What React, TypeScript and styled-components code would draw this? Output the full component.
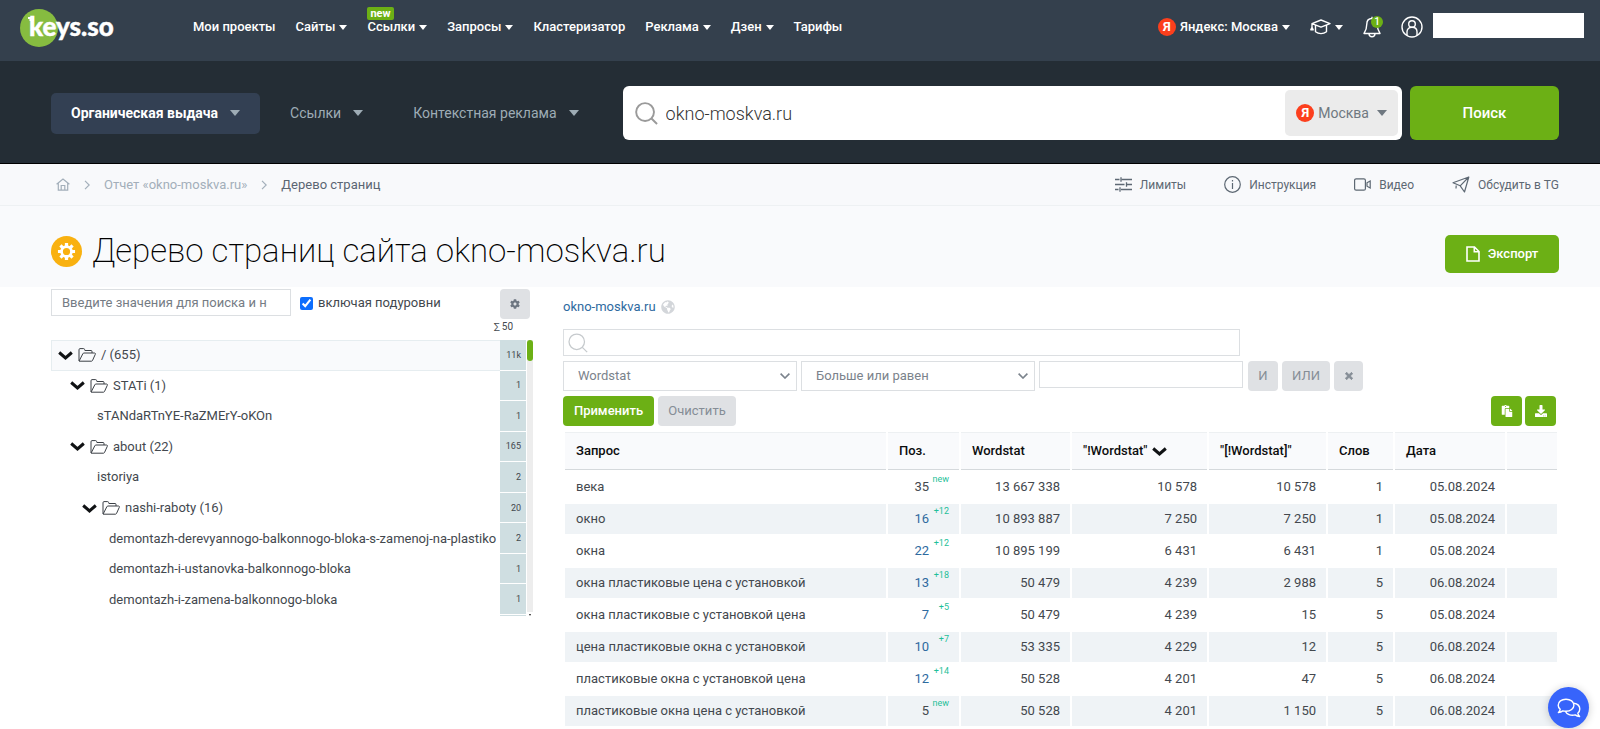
import React from "react";
import styled, { createGlobalStyle } from "styled-components";
import { FaCog, FaDownload, FaPaste, FaTimes, FaGlobeAmericas } from "react-icons/fa";

const GlobalStyle = createGlobalStyle`
  *, *::before, *::after { box-sizing: border-box; }
  body {
    margin: 0;
    background: #fff;
    color: #43484e;
    font-family: Roboto, "Liberation Sans", sans-serif;
    font-size: 13px;
    font-weight: 400;
    line-height: 20px;
  }
  button, input, select { font: inherit; color: inherit; margin: 0; }
  button { cursor: pointer; border: 0; padding: 0; background: none; }
  a { text-decoration: none; color: inherit; }
  svg { display: block; flex: none; }
`;

/* ---------- icons ---------- */

const Caret = styled.span<{ $size?: number }>`
  flex: none;
  width: 0;
  height: 0;
  border: ${(p) => p.$size ?? 4}px solid transparent;
  border-top: ${(p) => (p.$size ?? 4) + 1}px solid currentColor;
  border-bottom: 0;
`;

const SearchIcon = ({ size, width = 2 }: { size: number; width?: number }) => (
  <svg width={size} height={size} viewBox="0 0 24 24" fill="none" stroke="currentColor" strokeWidth={width}>
    <circle cx="10.5" cy="10.5" r="9.3" />
    <path d="M17.2 17.2 23 23" />
  </svg>
);

const FolderIcon = () => (
  <svg width="18" height="14" viewBox="0 0 18 14" fill="none" stroke="#3a3f45" strokeWidth="1">
    <path d="M1 13V1.8C1 1 1.4.6 2 .6h3.6c.6 0 .9.3 1 .9l.3 1H13c.7 0 1 .3 1 1V5" />
    <path d="M1 13.2h12.4c.5 0 .9-.2 1.100-.7L17.300 6.300C17.600 5.500 17.300 5 16.500 5H6c-.6 0-1 .3-1.200.8L1.200 12.900" />
  </svg>
);

const BoldChevron = ({ size = 15 }: { size?: number }) => (
  <svg width={size} height="9" viewBox="0 0 15 9" fill="none" stroke="#101214" strokeWidth="3">
    <path d="M1.200 1.500 7.500 7l6.300-5.500" />
  </svg>
);

const ThinChevron = () => (
  <svg width="6" height="10" viewBox="0 0 6 10" fill="none" stroke="currentColor" strokeWidth="1.2">
    <path d="M1 .8 5.200 5 1 9.200" />
  </svg>
);

const HomeIcon = () => (
  <svg width="14" height="13" viewBox="0 0 14 13" fill="none" stroke="currentColor" strokeWidth="1.200">
    <path d="M.6 6.300 7 1l6.400 5.300M2.300 5.200v7h9.400v-7M5.200 12V7.500h3.600V12" />
  </svg>
);

const LimitsIcon = () => (
  <svg width="17" height="15" viewBox="0 0 17 15" fill="none" stroke="currentColor" strokeWidth="1.300">
    <path d="M0 2.500h4.500M6.800 2.500H17M6 .3v4.400M0 7.500h9.500M12 7.500h5M11.500 5.300v4.400M0 12.500h3.500M6 12.500h11M5 10.300v4.400" />
  </svg>
);

const InfoIcon = () => (
  <svg width="17" height="17" viewBox="0 0 17 17" fill="none" stroke="currentColor" strokeWidth="1.200">
    <circle cx="8.500" cy="8.500" r="7.800" />
    <path d="M8.500 7v6M8.500 4v1.500" />
  </svg>
);

const VideoIcon = () => (
  <svg width="17" height="13" viewBox="0 0 17 13" fill="none" stroke="currentColor" strokeWidth="1.200">
    <rect x=".6" y=".8" width="10.800" height="11.400" rx="1.500" />
    <path d="M13 4.800 16.200 3v7L13 8.200Z" />
  </svg>
);

const PlaneIcon = () => (
  <svg width="18" height="17" viewBox="0 0 18 17" fill="none" stroke="currentColor" strokeWidth="1.200" strokeLinejoin="round">
    <path d="M1 6.800 16.800 1l-4.300 15-4.300-6.200ZM8.200 9.800 16.800 1M4.200 9.500l-.2 3" />
  </svg>
);

const CapIcon = () => (
  <svg width="21" height="16" viewBox="0 0 21 16" fill="none" stroke="currentColor" strokeWidth="1.400" strokeLinejoin="round">
    <path d="M11 1 20 4.600 11 8.200 2 4.600ZM5.500 6.500v6.200c3.200 2.300 7.800 2.300 11 0V6.500M2 4.600v3.600M.8 10.800 2 8.300l1.200 2.500Z" />
  </svg>
);

const BellIcon = () => (
  <svg width="18" height="22" viewBox="0 0 18 22" fill="none" stroke="currentColor" strokeWidth="1.400" strokeLinejoin="round">
    <path d="M9 2.500c-3.500 0-5.200 2.500-5.200 5.500 0 5-1.200 7.200-2.800 9.500h16c-1.600-2.300-2.800-4.500-2.800-9.500 0-3-1.700-5.500-5.200-5.500ZM9 2.500V.8M6 18c.3 3.600 5.700 3.600 6 0" />
  </svg>
);

const UserIcon = () => (
  <svg width="22" height="22" viewBox="0 0 22 22" fill="none" stroke="currentColor" strokeWidth="1.400">
    <circle cx="11" cy="11" r="10" />
    <circle cx="11" cy="8" r="3.300" />
    <path d="M6 19.200v-3.400c0-2.800 2-4.500 5-4.500s5 1.700 5 4.500v3.400" />
  </svg>
);

const GearIcon = () => (
  <svg width="19" height="19" viewBox="-10 -10 20 20" fill="none" stroke="#fff">
    <circle r="5.200" strokeWidth="2.800" />
    {[0, 45, 90, 135].map((angle) => (
      <path key={angle} d="M0-9v3.500M0 9V5.500" strokeWidth="3.400" transform={`rotate(${angle})`} />
    ))}
  </svg>
);

const FileIcon = () => (
  <svg width="14" height="16" viewBox="0 0 14 16" fill="none" stroke="currentColor" strokeWidth="1.600">
    <path d="M1 1h7.500L13 5.500V15H1ZM8.300 1v4.700H13" />
  </svg>
);

const ChatIcon = () => (
  <svg width="24" height="20" viewBox="0 0 24 20" fill="none" stroke="#fff" strokeWidth="1.400" strokeLinejoin="round">
    <path d="M9 1.200C4.500 1.200 1.200 3.700 1.200 7.200c0 1.700.8 3 2 4.100-.2 1.200-.8 2.300-1.800 3.200 1.700 0 3.200-.6 4.400-1.600 1 .3 2 .4 3.200.4 4.500 0 7.900-2.600 7.900-6.100S13.500 1.200 9 1.200Z" />
    <path d="M16.700 5.200c3.500.5 6.100 2.700 6.100 5.800 0 1.700-.8 3.100-2 4.200.2 1.200.8 2.300 1.800 3.300-1.700 0-3.200-.6-4.400-1.600-4.400 1-8.600-.6-9.900-3.600" />
  </svg>
);

const SelectArrow = () => (
  <svg width="10" height="6" viewBox="0 0 10 6" fill="none" stroke="currentColor" strokeWidth="1.600">
    <path d="M.6.6 5 5 9.400.6" />
  </svg>
);

/* ---------- top bar ---------- */

const TopBar = styled.header`
  display: flex;
  align-items: flex-start;
  height: 61px;
  padding: 0 16px 0 20px;
  background: #34404d;
  color: #fff;
`;

const Logo = styled.a`
  display: block;
  width: 98px;
  margin: 9px 75px 0 0;
`;

const Nav = styled.nav`
  display: flex;
  gap: 20px;
  margin-top: 17px;
`;

const NavLink = styled.a`
  position: relative;
  display: flex;
  align-items: center;
  gap: 4px;
  font-weight: 500;
  white-space: nowrap;
`;

const NewBadge = styled.span`
  position: absolute;
  left: 0;
  top: -10px;
  padding: 0 3px;
  border-radius: 2px;
  background: #6cb015;
  font-size: 11px;
  font-weight: 700;
  line-height: 13px;
`;

const UserTools = styled.div`
  display: flex;
  align-items: flex-start;
  margin-left: auto;
`;

const ToolButton = styled.button<{ $gap?: number }>`
  position: relative;
  display: flex;
  align-items: center;
  gap: 4px;
  height: 22px;
  margin: 16px ${(p) => p.$gap ?? 20}px 0 0;
  font-weight: 500;
  white-space: nowrap;
`;

const YandexMark = styled.span`
  display: grid;
  place-items: center;
  width: 18px;
  height: 18px;
  border-radius: 50%;
  background: #fc3f1d;
  color: #fff;
  font-size: 13px;
  font-weight: 700;
  line-height: 18px;
`;

const CountBadge = styled.span`
  position: absolute;
  right: -2px;
  top: 0;
  width: 12px;
  height: 12px;
  border-radius: 50%;
  background: #6cb015;
  font-size: 10px;
  line-height: 12px;
  text-align: center;
`;

const AccountName = styled.div`
  width: 151px;
  height: 25px;
  margin-top: 13px;
  background: #fff;
`;

/* ---------- search bar ---------- */

const SearchBar = styled.section`
  display: flex;
  align-items: center;
  height: 103px;
  padding: 2px 41px 0 51px;
  border-bottom: 1px solid #000;
  background: #242d35;
`;

const Tab = styled.button<{ $active?: boolean }>`
  display: flex;
  align-items: center;
  gap: 12px;
  height: 41px;
  padding: 0 20px;
  margin-right: 10px;
  border-radius: 5px;
  background: ${(p) => (p.$active ? "#334053" : "transparent")};
  color: #9eacb5;
  font-size: 14px;
  font-weight: ${(p) => (p.$active ? 700 : 400)};
  white-space: nowrap;
`;

const TabLabel = styled.span<{ $active?: boolean }>`
  color: ${(p) => (p.$active ? "#fff" : "inherit")};
`;

const SearchBox = styled.form`
  display: flex;
  flex: 1;
  min-width: 0;
  gap: 8px;
  margin-left: 14px;
`;

const SearchField = styled.div`
  display: flex;
  align-items: center;
  flex: 1;
  min-width: 0;
  height: 54px;
  padding: 0 4px 0 12px;
  border-radius: 6px;
  background: #fff;
  color: #9a9a9a;
`;

const SearchInput = styled.input`
  flex: 1;
  min-width: 0;
  height: 40px;
  padding: 0 8px;
  border: 0;
  outline: 0;
  color: #333;
  font-size: 18px;
  font-weight: 300;
`;

const RegionButton = styled.button`
  display: flex;
  align-items: center;
  gap: 4px;
  height: 46px;
  padding: 0 11px;
  border-radius: 5px;
  background: #ebebeb;
  color: #6f7880;
  font-size: 14px;
`;

const RegionCaret = styled(Caret)`
  margin-left: 4px;
`;

const SubmitButton = styled.button`
  width: 149px;
  height: 54px;
  border-radius: 6px;
  background: #6cb015;
  color: #fff;
  font-size: 15px;
  font-weight: 500;
`;

/* ---------- breadcrumbs and title ---------- */

const Crumbs = styled.div`
  display: flex;
  align-items: center;
  justify-content: space-between;
  height: 42px;
  padding: 0 41px 0 56px;
  border-bottom: 1px solid #eef1f3;
  background: #f8f9fb;
`;

const CrumbList = styled.nav`
  display: flex;
  align-items: center;
  gap: 14px;
  color: #a3afba;
`;

const CurrentCrumb = styled.span`
  color: #5b6673;
`;

const HelpLinks = styled.nav`
  display: flex;
  gap: 38px;
`;

const HelpLink = styled.a`
  display: flex;
  align-items: center;
  gap: 8px;
  color: #5d6873;
  font-size: 12px;
`;

const TitleRow = styled.div`
  display: flex;
  align-items: center;
  height: 81px;
  padding: 9px 41px 0 51px;
  background: #f9fafc;
`;

const TitleMark = styled.span`
  display: grid;
  place-items: center;
  width: 31px;
  height: 31px;
  margin-right: 10px;
  border-radius: 50%;
  background: #f9b110;
`;

const Title = styled.h1`
  margin: 0;
  color: #000;
  font-size: 33px;
  font-weight: 200;
  line-height: 40px;
`;

const ExportButton = styled.button`
  display: flex;
  align-items: center;
  justify-content: center;
  gap: 8px;
  width: 114px;
  height: 38px;
  margin: 5px 0 0 auto;
  border-radius: 5px;
  background: #6cb015;
  color: #fff;
  font-weight: 500;
`;

/* ---------- content ---------- */

const Content = styled.main`
  display: grid;
  grid-template-columns: 482px minmax(0, 1fr);
  gap: 30px;
  padding: 2px 41px 0 51px;
`;

const TreeTools = styled.div`
  display: flex;
  height: 30px;
  padding-right: 3px;
`;

const TextInput = styled.input`
  height: 27px;
  border: 1px solid #dcdfe2;
  background: #fff;
  outline: 0;
  &::placeholder { color: #757c84; opacity: 1; }
`;

const TreeFilter = styled(TextInput)`
  width: 240px;
  padding: 0 23px 0 10px;
`;

const CheckLabel = styled.label`
  display: flex;
  align-items: center;
  gap: 5px;
  height: 28px;
  margin-left: 9px;
  input { width: 13px; height: 13px; accent-color: #0d6efd; }
`;

const GreyButton = styled.button<{ $width?: number }>`
  display: grid;
  place-items: center;
  width: ${(p) => (p.$width ? `${p.$width}px` : "auto")};
  height: 30px;
  border-radius: 4px;
  background: #dfe1e4;
  color: #858d96;
`;

const TreeSettings = styled(GreyButton)`
  margin-left: auto;
  color: #6d7681;
`;

const Total = styled.div`
  height: 21px;
  padding-right: 20px;
  font-size: 10px;
  line-height: 16px;
  text-align: right;
`;

const TreeScroll = styled.div`
  display: grid;
  grid-template-columns: minmax(0, 1fr) 7px;
  height: 277px;
`;

const TreeList = styled.ul`
  display: grid;
  grid-template-rows: repeat(9, 1fr) 2px;
  margin: 0;
  padding: 0;
  list-style: none;
  overflow: hidden;
`;

const TreeItem = styled.li`
  display: grid;
  grid-template-columns: minmax(0, 1fr) 26px;
  overflow: hidden;
`;

const TreeName = styled.a<{ $indent: number; $selected?: boolean }>`
  display: flex;
  align-items: center;
  gap: 5px;
  padding-left: ${(p) => p.$indent}px;
  border: 1px solid ${(p) => (p.$selected ? "#e6edf0" : "transparent")};
  border-right: 0;
  background: ${(p) => (p.$selected ? "#f9fafc" : "transparent")};
  white-space: nowrap;
  overflow: hidden;
`;

const TreeCount = styled.span`
  display: flex;
  align-items: center;
  justify-content: flex-end;
  padding-right: 5px;
  border-bottom: 1px solid #fff;
  background: #cfdee1;
  font-size: 9px;
`;

const ScrollTrack = styled.div`
  display: flex;
  flex-direction: column;
  justify-content: space-between;
  margin-left: 1px;
  background: #ededed;
`;

const ScrollThumb = styled.span`
  width: 6px;
  height: 21px;
  border-radius: 3px;
  background: #6cb015;
`;

const ScrollEnd = styled.span`
  display: grid;
  place-items: center;
  height: 5px;
  background: #fff;
  color: #222;
`;

/* ---------- results ---------- */

const SiteLine = styled.div`
  display: flex;
  align-items: center;
  gap: 5px;
  height: 36px;
  margin-bottom: 4px;
  color: #d3d6da;
`;

const BlueLink = styled.a`
  color: #2e6a9f;
`;

const SiteLink = styled(BlueLink)`
  font-size: 13px;
`;

const QueryField = styled.label`
  display: flex;
  align-items: center;
  width: 68%;
  height: 27px;
  padding-left: 4px;
  border: 1px solid #dcdfe2;
  color: #c6cacd;
`;

const QueryInput = styled.input`
  flex: 1;
  min-width: 0;
  padding: 0 6px;
  border: 0;
  outline: 0;
  background: none;
`;

const FilterRow = styled.div`
  display: flex;
  gap: 4px;
  height: 30px;
  margin-top: 5px;
`;

const SelectWrap = styled.div`
  position: relative;
  width: 234px;
  height: 30px;
  color: #7b838c;
  svg {
    position: absolute;
    right: 7px;
    top: 12px;
    pointer-events: none;
  }
`;

const Select = styled.select`
  width: 100%;
  height: 100%;
  padding: 0 30px 0 14px;
  border: 1px solid #dcdfe2;
  border-radius: 0;
  background: #fff;
  appearance: none;
  outline: 0;
`;

const ValueInput = styled(TextInput)`
  width: 204px;
  padding: 0 8px;
  margin-right: 1px;
`;

const GreenButton = styled.button<{ $width: number }>`
  display: grid;
  place-items: center;
  width: ${(p) => p.$width}px;
  height: 30px;
  border-radius: 4px;
  background: #6cb015;
  color: #fff;
  font-weight: 500;
`;

const RightActions = styled.div`
  display: flex;
  gap: 3px;
  margin: 0 3px 0 auto;
`;

const Table = styled.table`
  width: 100%;
  margin-top: 4px;
  border-collapse: separate;
  border-spacing: 2px;
  table-layout: fixed;
`;

const Th = styled.th<{ $width?: number }>`
  width: ${(p) => (p.$width ? `${p.$width}px` : "auto")};
  height: 38px;
  padding: 0 0 0 11px;
  border-top: 1px solid #edf0f2;
  border-bottom: 1px solid #d5d9dc;
  background: #f9fafc;
  color: #0c0d0e;
  font-weight: 500;
  text-align: left;
  white-space: nowrap;
`;

const SortLabel = styled.span`
  display: flex;
  align-items: center;
  gap: 4px;
`;

const Td = styled.td<{ $right?: boolean }>`
  height: 30px;
  padding: 0 10px 0 11px;
  text-align: ${(p) => (p.$right ? "right" : "left")};
  white-space: nowrap;
  tr:nth-child(even) > & { background: #eff3f6; }
`;

const Position = styled.span`
  display: flex;
  justify-content: flex-end;
  height: 20px;
`;

const Delta = styled.span`
  width: 20px;
  color: #1fbf99;
  font-size: 9px;
  line-height: 4px;
  text-align: right;
`;

const ChatButton = styled.button`
  position: fixed;
  right: 11px;
  bottom: 1px;
  display: grid;
  place-items: center;
  width: 41px;
  height: 41px;
  border-radius: 50%;
  background: #3764fb;
  box-shadow: 0 1px 8px rgba(0, 0, 0, 0.2);
`;

/* ---------- data ---------- */

const navItems = [
  { label: "Мои проекты" },
  { label: "Сайты", menu: true },
  { label: "Ссылки", menu: true, fresh: true },
  { label: "Запросы", menu: true },
  { label: "Кластеризатор" },
  { label: "Реклама", menu: true },
  { label: "Дзен", menu: true },
  { label: "Тарифы" },
];

const tree = [
  { name: "/ (655)", count: "11k", indent: 6, folder: true, selected: true },
  { name: "STATi (1)", count: "1", indent: 18, folder: true },
  { name: "sTANdaRTnYE-RaZMErY-oKOn", count: "1", indent: 45 },
  { name: "about (22)", count: "165", indent: 18, folder: true },
  { name: "istoriya", count: "2", indent: 45 },
  { name: "nashi-raboty (16)", count: "20", indent: 30, folder: true },
  { name: "demontazh-derevyannogo-balkonnogo-bloka-s-zamenoj-na-plastiko", count: "2", indent: 57 },
  { name: "demontazh-i-ustanovka-balkonnogo-bloka", count: "1", indent: 57 },
  { name: "demontazh-i-zamena-balkonnogo-bloka", count: "1", indent: 57 },
];

const rows = [
  ["века", "35", "new", "13 667 338", "10 578", "10 578", "1", "05.08.2024"],
  ["окно", "16", "+12", "10 893 887", "7 250", "7 250", "1", "05.08.2024"],
  ["окна", "22", "+12", "10 895 199", "6 431", "6 431", "1", "05.08.2024"],
  ["окна пластиковые цена с установкой", "13", "+18", "50 479", "4 239", "2 988", "5", "06.08.2024"],
  ["окна пластиковые с установкой цена", "7", "+5", "50 479", "4 239", "15", "5", "05.08.2024"],
  ["цена пластиковые окна с установкой", "10", "+7", "53 335", "4 229", "12", "5", "06.08.2024"],
  ["пластиковые окна с установкой цена", "12", "+14", "50 528", "4 201", "47", "5", "06.08.2024"],
  ["пластиковые окна цена с установкой", "5", "new", "50 528", "4 201", "1 150", "5", "06.08.2024"],
];

export default function App() {
  return (
    <>
      <GlobalStyle />
      <TopBar>
        <Logo href="#" aria-label="keys.so">
          <svg width="98" height="40" viewBox="0 0 98 40">
            <circle cx="19" cy="19" r="19" fill="#86bc40" />
            <path d="M8 8h6v4H9.500V10H8Z" fill="#fff" />
            <text x="9" y="27" fill="#fff" stroke="#fff" strokeWidth=".4" fontFamily="Lato, sans-serif" fontSize="26" fontWeight="900">keys.so</text>
          </svg>
        </Logo>
        <Nav>
          {navItems.map((item) => (
            <NavLink href="#" key={item.label}>
              {item.fresh && <NewBadge>new</NewBadge>}
              {item.label}
              {item.menu && <Caret />}
            </NavLink>
          ))}
        </Nav>
        <UserTools>
          <ToolButton>
            <YandexMark>Я</YandexMark>
            Яндекс: Москва
            <Caret />
          </ToolButton>
          <ToolButton aria-label="Обучение">
            <CapIcon />
            <Caret />
          </ToolButton>
          <ToolButton aria-label="Уведомления">
            <BellIcon />
            <CountBadge>1</CountBadge>
          </ToolButton>
          <ToolButton $gap={10} aria-label="Профиль">
            <UserIcon />
          </ToolButton>
          <AccountName />
        </UserTools>
      </TopBar>

      <SearchBar>
        <Tab $active>
          <TabLabel $active>Органическая выдача</TabLabel>
          <Caret $size={5} />
        </Tab>
        <Tab>
          <TabLabel>Ссылки</TabLabel>
          <Caret $size={5} />
        </Tab>
        <Tab>
          <TabLabel>Контекстная реклама</TabLabel>
          <Caret $size={5} />
        </Tab>
        <SearchBox onSubmit={(e) => e.preventDefault()}>
          <SearchField>
            <SearchIcon size={23} />
            <SearchInput aria-label="Домен" defaultValue="okno-moskva.ru" />
            <RegionButton type="button">
              <YandexMark>Я</YandexMark>
              Москва
              <RegionCaret $size={5} />
            </RegionButton>
          </SearchField>
          <SubmitButton>Поиск</SubmitButton>
        </SearchBox>
      </SearchBar>

      <Crumbs>
        <CrumbList>
          <a href="#" aria-label="Главная"><HomeIcon /></a>
          <ThinChevron />
          <a href="#">Отчет «okno-moskva.ru»</a>
          <ThinChevron />
          <CurrentCrumb>Дерево страниц</CurrentCrumb>
        </CrumbList>
        <HelpLinks>
          <HelpLink href="#"><LimitsIcon />Лимиты</HelpLink>
          <HelpLink href="#"><InfoIcon />Инструкция</HelpLink>
          <HelpLink href="#"><VideoIcon />Видео</HelpLink>
          <HelpLink href="#"><PlaneIcon />Обсудить в TG</HelpLink>
        </HelpLinks>
      </Crumbs>

      <TitleRow>
        <TitleMark><GearIcon /></TitleMark>
        <Title>Дерево страниц сайта okno-moskva.ru</Title>
        <ExportButton><FileIcon />Экспорт</ExportButton>
      </TitleRow>

      <Content>
        <section>
          <TreeTools>
            <TreeFilter aria-label="Поиск по дереву" placeholder="Введите значения для поиска и нажмите Enter" />
            <CheckLabel>
              <input type="checkbox" defaultChecked />
              включая подуровни
            </CheckLabel>
            <TreeSettings $width={30} aria-label="Настройки"><FaCog size={10} /></TreeSettings>
          </TreeTools>
          <Total>∑ 50</Total>
          <TreeScroll>
            <TreeList>
              {tree.map((item) => (
                <TreeItem key={item.name}>
                  <TreeName href="#" $indent={item.indent} $selected={item.selected}>
                    {item.folder && <BoldChevron />}
                    {item.folder && <FolderIcon />}
                    {item.name}
                  </TreeName>
                  <TreeCount>{item.count}</TreeCount>
                </TreeItem>
              ))}
              <TreeItem>
                <span />
                <TreeCount />
              </TreeItem>
            </TreeList>
            <ScrollTrack>
              <ScrollThumb />
              <ScrollEnd><Caret $size={1} /></ScrollEnd>
            </ScrollTrack>
          </TreeScroll>
        </section>

        <section>
          <SiteLine>
            <SiteLink href="#">okno-moskva.ru</SiteLink>
            <FaGlobeAmericas size={14} />
          </SiteLine>
          <QueryField>
            <SearchIcon size={20} width={1.5} />
            <QueryInput aria-label="Поиск запроса" />
          </QueryField>
          <FilterRow>
            <SelectWrap>
              <Select aria-label="Поле"><option>Wordstat</option></Select>
              <SelectArrow />
            </SelectWrap>
            <SelectWrap>
              <Select aria-label="Условие"><option>Больше или равен</option></Select>
              <SelectArrow />
            </SelectWrap>
            <ValueInput aria-label="Значение" />
            <GreyButton $width={30}>И</GreyButton>
            <GreyButton $width={48}>ИЛИ</GreyButton>
            <GreyButton $width={29} aria-label="Удалить условие"><FaTimes size={10} strokeWidth={50} stroke="currentColor" /></GreyButton>
          </FilterRow>
          <FilterRow>
            <GreenButton $width={91}>Применить</GreenButton>
            <GreyButton $width={78}>Очистить</GreyButton>
            <RightActions>
              <GreenButton $width={31} aria-label="Копировать"><FaPaste size={12} /></GreenButton>
              <GreenButton $width={31} aria-label="Скачать"><FaDownload size={12} /></GreenButton>
            </RightActions>
          </FilterRow>
          <Table>
            <thead>
              <tr>
                <Th>Запрос</Th>
                <Th $width={71}>Поз.</Th>
                <Th $width={109}>Wordstat</Th>
                <Th $width={135}><SortLabel>"!Wordstat" <BoldChevron /></SortLabel></Th>
                <Th $width={117}>"[!Wordstat]"</Th>
                <Th $width={65}>Слов</Th>
                <Th $width={110}>Дата</Th>
                <Th $width={50} aria-label="Действия" />
              </tr>
            </thead>
            <tbody>
              {rows.map(([query, pos, delta, ...values]) => (
                <tr key={query}>
                  <Td>{query}</Td>
                  <Td $right>
                    <Position>
                      {delta === "new" ? pos : <BlueLink href="#">{pos}</BlueLink>}
                      <Delta>{delta}</Delta>
                    </Position>
                  </Td>
                  {values.map((value, i) => (
                    <Td $right key={i}>{value}</Td>
                  ))}
                  <Td />
                </tr>
              ))}
            </tbody>
          </Table>
        </section>
      </Content>
      <ChatButton aria-label="Чат"><ChatIcon /></ChatButton>
    </>
  );
}
